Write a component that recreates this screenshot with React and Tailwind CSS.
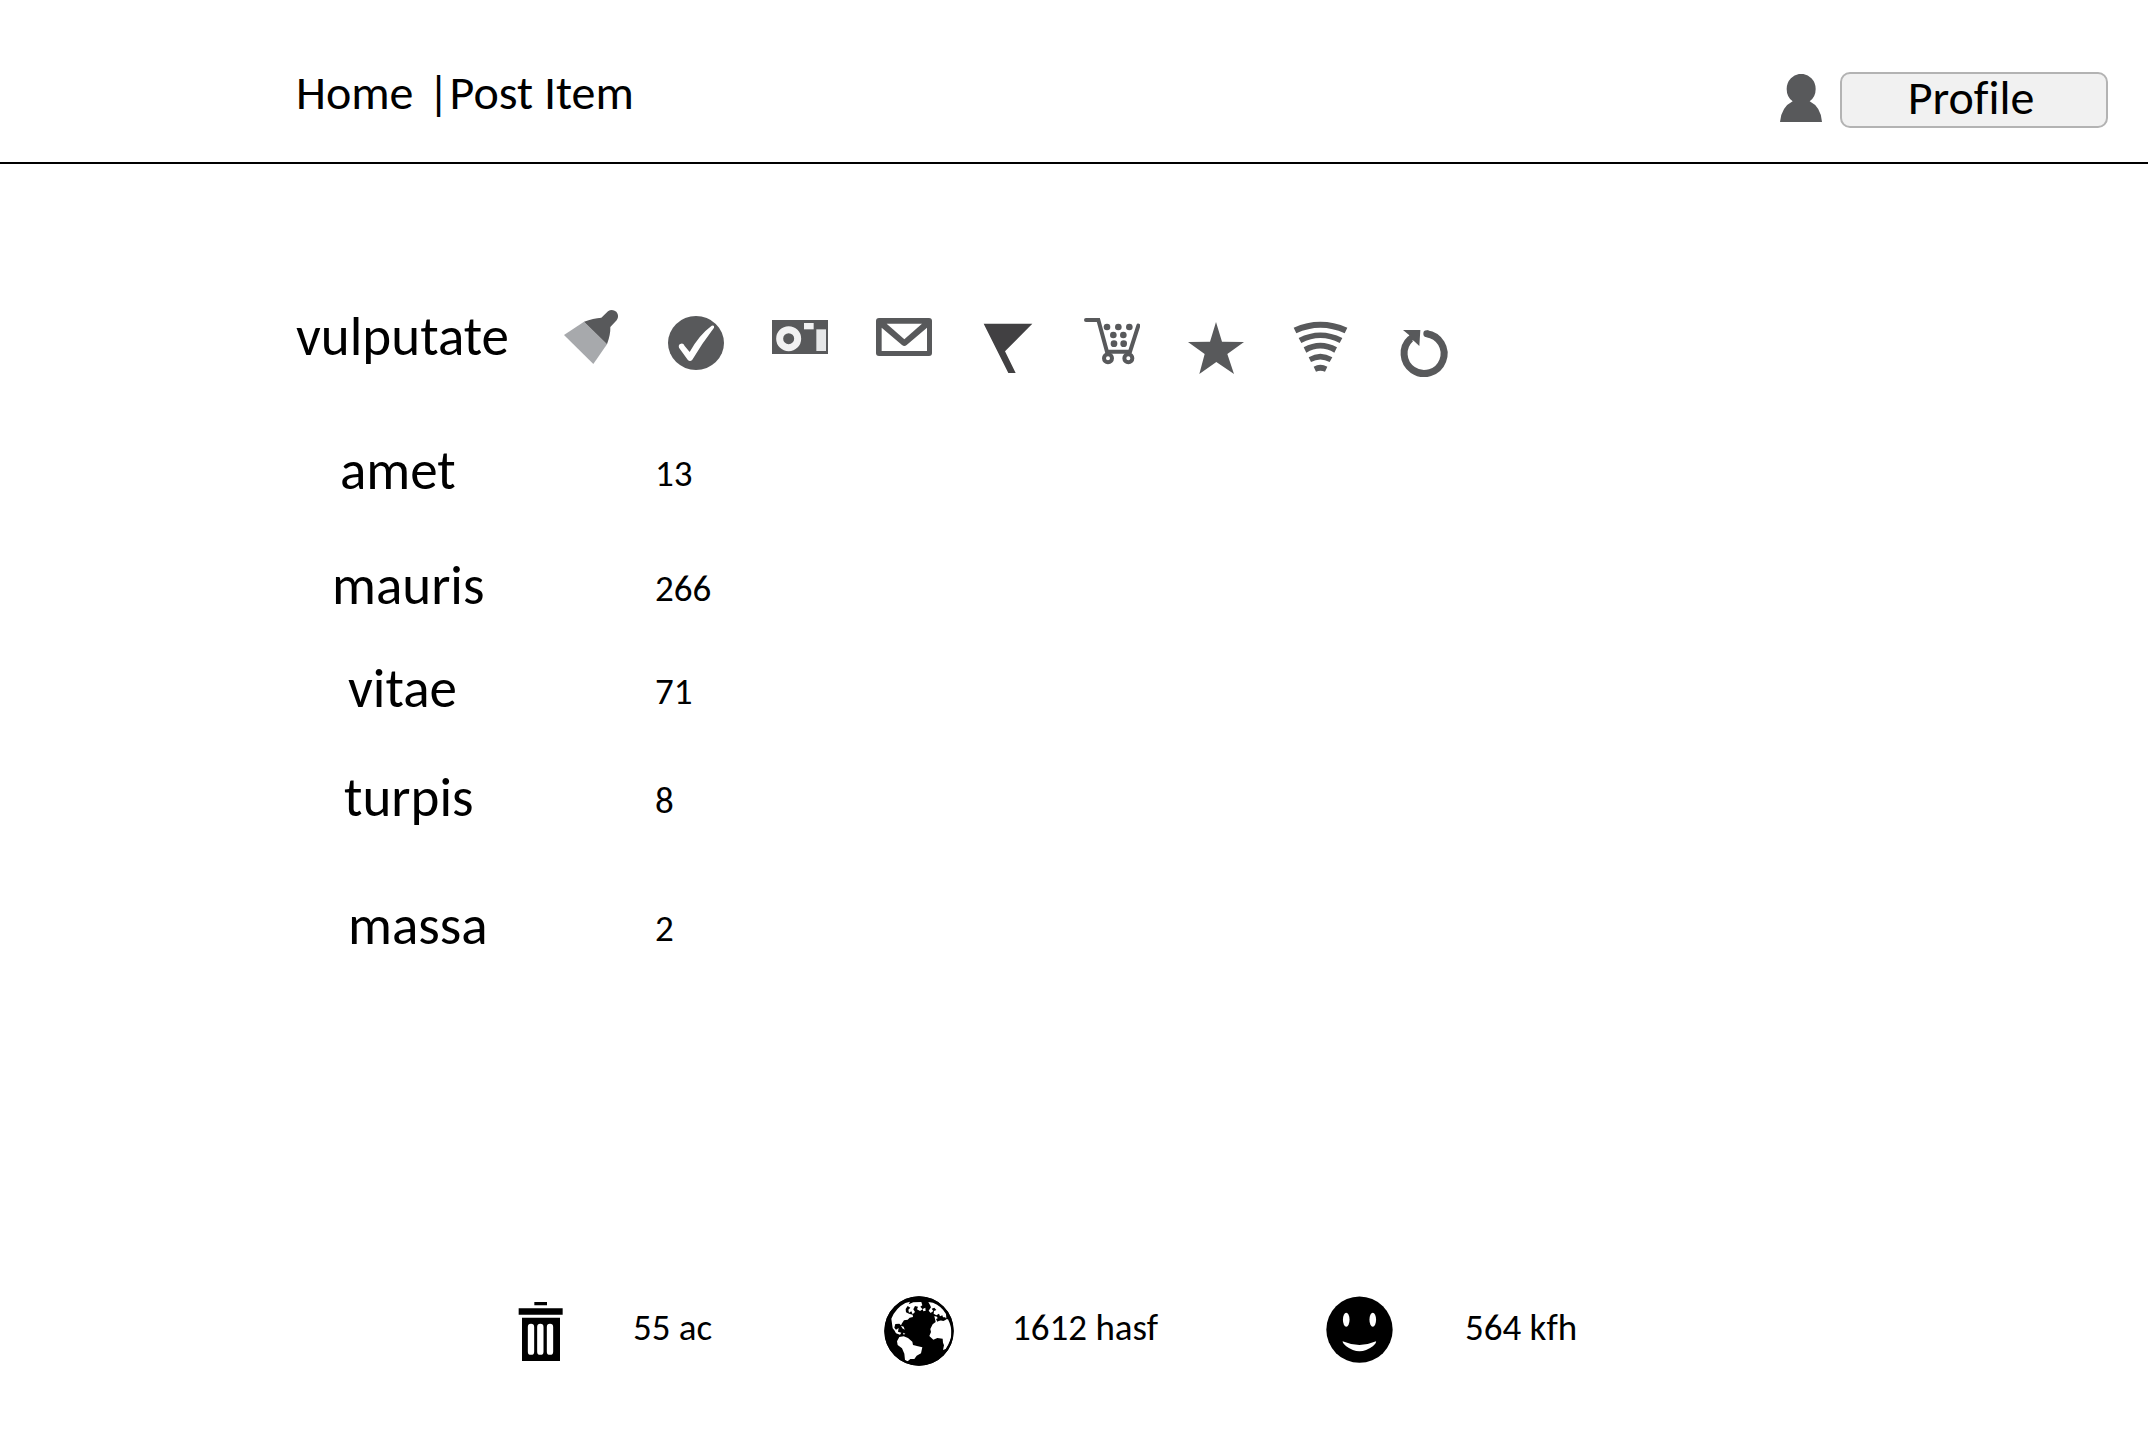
const actions = [
  {
    label: 'Clean',
    viewBox: '852 54 168 216',
    art: (
      <>
        <path d="M852 135L912 95L981 163L940 222Z" fill="#a7a9ac" />
        <path d="M912 95Q940 84 964 83L984 64Q996 55 1009 65Q1019 78 1010 91L991 111Q992 133 981 163Z" fill="#58595b" />
      </>
    ),
  },
  {
    label: 'Approve',
    viewBox: '84 54 168 216',
    art: (
      <>
        <ellipse cx="168" cy="159" rx="84" ry="81" fill="#58595b" />
        <path d="M117 173Q114 163 123 161Q130 159 134 168L149 186Q176 136 215 107Q224 104 222 113Q186 160 157 209Q150 217 143 209Z" fill="#fff" />
      </>
    ),
  },
  {
    label: 'Camera',
    viewBox: '396 54 168 216',
    art: (
      <>
        <path d="M396 90H564V192H396Z" fill="#58595b" />
        <circle cx="446" cy="146" r="27" fill="none" stroke="#f1f1f2" strokeWidth="21" />
        <path d="M492 99H521V118H492Z" fill="#f1f1f2" />
        <path d="M529 118H558V183H529Z" fill="#e6e7e8" />
      </>
    ),
  },
  {
    label: 'Mail',
    viewBox: '708 54 168 216',
    art: (
      <>
        <rect x="708" y="84" width="168" height="114" rx="9" fill="#58595b" />
        <path d="M740 101H846L793 148Z" fill="#fff" />
        <path d="M725 113L786 165Q793 171 800 165L861 113V183H725Z" fill="#fff" />
      </>
    ),
  },
  {
    label: 'Flag',
    viewBox: '90 54 168 216',
    art: <path d="M101 101H247L165 184L197 249H175Z" fill="#414042" />,
  },
  {
    label: 'Cart',
    viewBox: '402 54 168 216',
    art: (
      <g fill="#58595b">
        <path d="M408 90H445L471 185H540L565 107" fill="none" stroke="#58595b" strokeWidth="12" strokeLinecap="round" />
        <circle cx="474" cy="205" r="12" fill="none" stroke="#58595b" strokeWidth="12" />
        <circle cx="535" cy="205" r="12" fill="none" stroke="#58595b" strokeWidth="12" />
        <circle cx="471" cy="111" r="10" />
        <circle cx="505" cy="111" r="10" />
        <circle cx="538" cy="111" r="10" />
        <circle cx="490" cy="135" r="10" />
        <circle cx="520" cy="135" r="10" />
        <circle cx="492" cy="161" r="10" />
        <circle cx="521" cy="161" r="10" />
      </g>
    ),
  },
  {
    label: 'Favourite',
    viewBox: '54 54 168 216',
    art: <path d="M138 96L156 155L222 156L172 192L192 252L139 216L88 252L104 192L54 156L120 155Z" fill="#58595b" />,
  },
  {
    label: 'Signal',
    viewBox: '366 54 168 216',
    art: (
      <g fill="#58595b">
        <path d="M371 113Q451 78 532 113L524 130Q451 97 379 130Z" />
        <path d="M386 144Q451 111 517 144L509 159Q451 129 394 159Z" />
        <path d="M401 172Q451 145 501 172L493 188Q451 163 409 188Z" />
        <path d="M416 202Q451 181 487 202L479 216Q451 201 423 216Z" />
        <path d="M431 230Q451 219 472 230L465 245Q451 240 438 245Z" />
      </g>
    ),
  },
  {
    label: 'Refresh',
    viewBox: '678 54 168 216',
    art: (
      <>
        <path d="M770 131A60 60 0 1 1 722 146" fill="none" stroke="#58595b" strokeWidth="21" />
        <circle cx="770" cy="131" r="10" fill="#58595b" />
        <path d="M699 120H751L748 168L731 152L712 146L718 136Z" fill="#58595b" />
      </>
    ),
  },
];

const rows = [
  { name: 'amet', value: '13', indent: 'pl-11', height: 'h-[115px]' },
  { name: 'mauris', value: '266', indent: 'pl-9', height: 'h-[103px]' },
  { name: 'vitae', value: '71', indent: 'pl-13', height: 'h-[109px]' },
  { name: 'turpis', value: '8', indent: 'pl-12', height: 'h-[128px]' },
  { name: 'massa', value: '2', indent: 'pl-13', height: 'h-16' },
];

function TrashIcon() {
  return (
    <svg viewBox="54 60 135 180" className="h-[60px] w-[45px]" aria-hidden="true">
      <path d="M103 63H141V73H103ZM56 82H188V101H56ZM66 110H180V240H66Z" />
      <path d="M93 138V212M121 138V212M150 138V212" stroke="#fff" strokeWidth="19" strokeLinecap="round" />
    </svg>
  );
}

function GlobeIcon() {
  return (
    <svg viewBox="72 48 210 210" className="size-[70px]" aria-hidden="true">
      <circle cx="177" cy="153" r="104" />
      <g fill="#fff">
        <path d="M94 116Q107 84 136 69L150 65L146 73L160 67L184 66L187 76L181 80L188 88L180 93L171 88L174 80L165 78L160 88L165 96L158 103L154 94L147 98L145 89L151 83L143 78L137 87L138 97L147 101L158 104L159 111L149 113L143 119L132 121L126 130L123 136L118 131L106 132L103 143L108 149L116 144L114 155L124 158L120 164L108 160L103 151L98 145Z" />
        <path d="M123 137L131 140L134 149L127 145Z" />
        <path d="M129 158L136 161L131 164Z" />
        <path d="M118 171L131 169L144 174L157 185L159 195L174 199L187 202L183 220L170 227L163 237L151 237L143 244L135 240L133 221L126 205L113 195L111 184Z" />
        <path d="M188 87L196 83L197 92L190 94Z" />
        <path d="M205 66L219 68Q245 78 258 102L259 115L250 115L247 106L240 109L237 101L229 106L221 101L222 93L229 90L223 83L215 86L220 93L212 99L206 92L213 82L210 75Z" />
        <path d="M223 108L231 110L236 122L254 118L264 118Q275 139 274 163Q273 184 257 207L249 210L252 196L249 188L248 176L232 174L220 179L208 168L213 156L211 147L218 133L227 126Z" />
      </g>
      <path d="M228 117L235 114L246 112L256 112L258 119L250 123L240 121L232 125Z" />
      <circle cx="177" cy="153" r="101" fill="none" stroke="#000" strokeWidth="6" />
    </svg>
  );
}

function SmileIcon() {
  return (
    <svg viewBox="78 48 202 210" className="h-[70px] w-[67px]" aria-hidden="true">
      <circle cx="179" cy="149" r="100" />
      <g fill="#fff">
        <ellipse cx="139" cy="119" rx="10" ry="21" />
        <ellipse cx="219" cy="119" rx="10" ry="21" />
        <path d="M128 184Q179 206 229 184Q230 190 219 199Q179 229 139 199Q128 190 128 184Z" />
      </g>
    </svg>
  );
}

export default function App() {
  return (
    <div className="flex min-h-screen flex-col bg-white font-[Carlito,Lato,sans-serif] text-black [font-variant-ligatures:none]">
      <header className="flex h-[164px] items-start justify-between border-b-2 border-black pr-10 pl-[296px]">
        <nav className="flex pt-16 text-[48px] leading-[58px]">
          <a href="#home">Home</a>
          <span className="pl-3.5">|</span>
          <a href="#post">Post Item</a>
        </nav>
        <div className="flex items-center gap-[18px] pt-[72px]">
          <svg viewBox="60 72 126 144" className="mb-1 h-12 w-[42px]" aria-hidden="true">
            <path d="M60 216Q64 171 98 154Q80 141 80 117A43 45 0 0 1 167 117Q167 141 149 154Q183 171 186 216Z" fill="#58595b" />
          </svg>
          <button type="button" className="h-14 w-[268px] rounded-[10px] border-2 border-[#b3b3b3] bg-[#f1f1f1] pr-1.5 pb-1 text-[48px] leading-[48px]">
            Profile
          </button>
        </div>
      </header>

      <main className="pt-36 pl-[296px]">
        <div className="flex h-[72px] items-start">
          <h1 className="w-[268px] text-[55px] leading-[58px]">vulputate</h1>
          <div className="flex gap-12">
            {actions.map((a) => (
              <button key={a.label} type="button" aria-label={a.label}>
                <svg viewBox={a.viewBox} className="h-[72px] w-14" aria-hidden="true">
                  {a.art}
                </svg>
              </button>
            ))}
          </div>
        </div>

        <dl className="pt-[62px]">
          {rows.map((r) => (
            <div key={r.name} className={`flex items-start ${r.height}`}>
              <dt className={`w-[359px] text-[55px] leading-[58px] ${r.indent}`}>{r.name}</dt>
              <dd className="text-[37px] leading-[64px]">{r.value}</dd>
            </div>
          ))}
        </dl>
      </main>

      <footer className="mt-auto flex h-[154px] items-start pl-[518px] text-[37px] leading-[64px]">
        <div className="flex h-[70px] w-[366px] items-center gap-[70px]">
          <TrashIcon />
          <span className="pb-1.5">55 ac</span>
        </div>
        <div className="flex h-[70px] w-[442px] items-center gap-[58px]">
          <GlobeIcon />
          <span className="pb-1.5">1612 hasf</span>
        </div>
        <div className="flex h-[70px] items-center gap-[72px]">
          <SmileIcon />
          <span className="pb-1.5">564 kfh</span>
        </div>
      </footer>
    </div>
  );
}
